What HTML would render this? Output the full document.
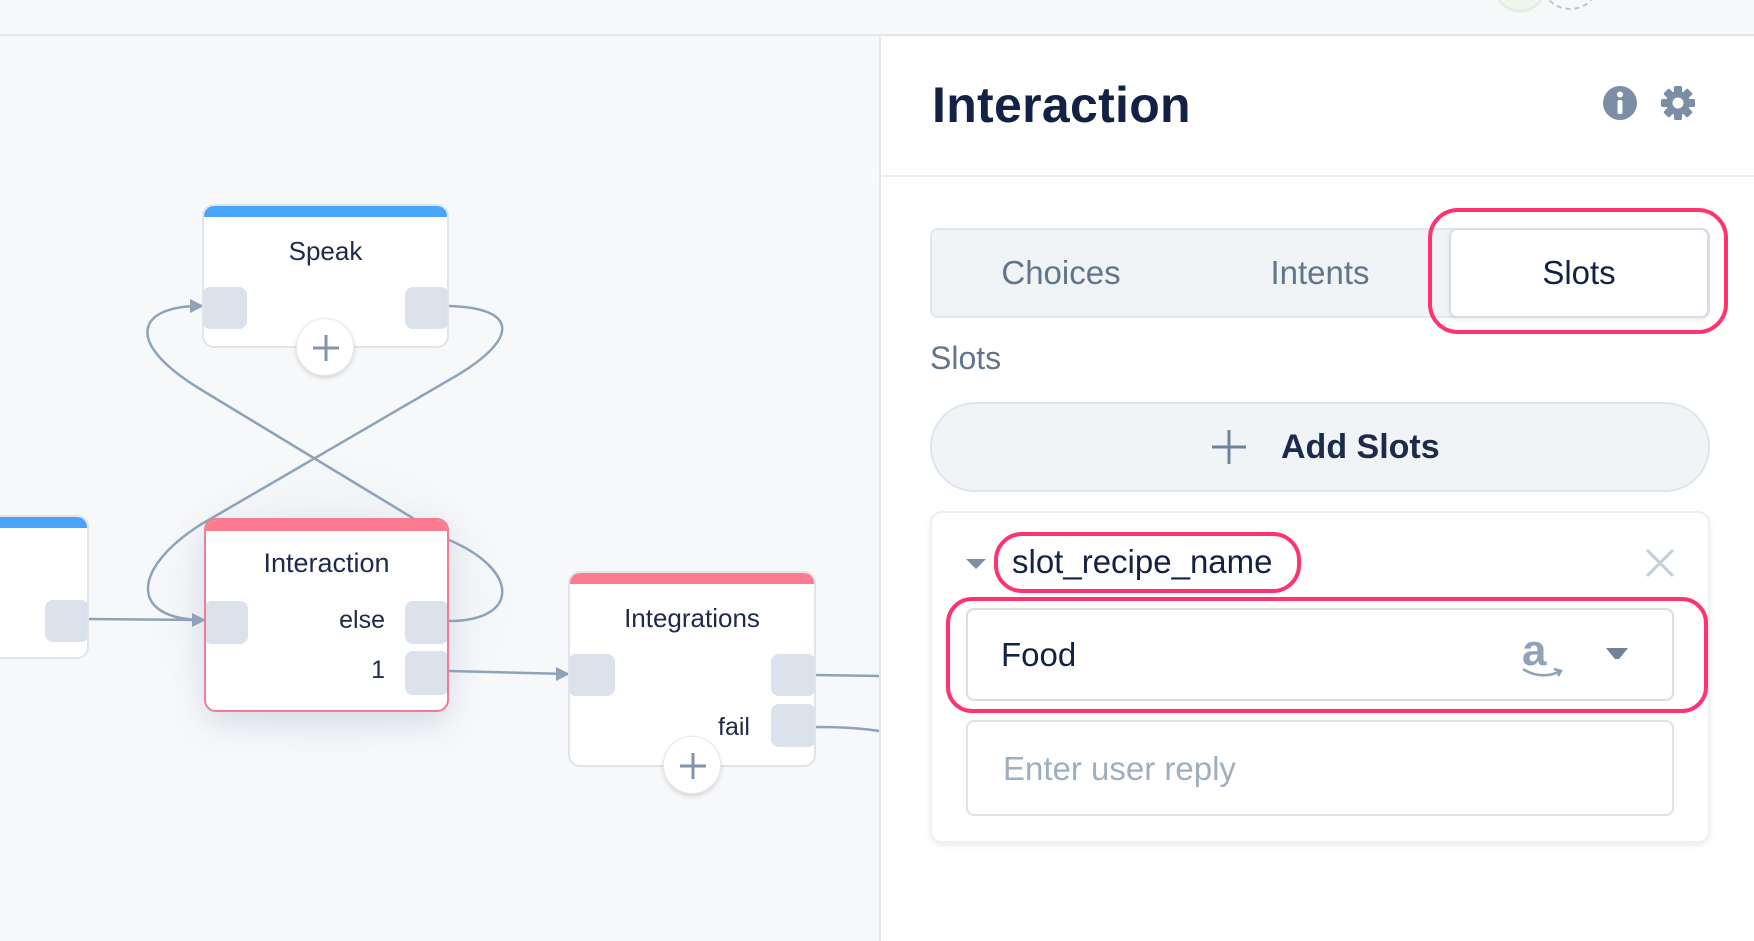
<!DOCTYPE html>
<html><head><meta charset="utf-8"><style>
*{margin:0;padding:0;box-sizing:border-box}
body{width:1754px;height:941px;overflow:hidden;background:#f7f8f9;font-family:"Liberation Sans",sans-serif;position:relative;color:#1d2a4a}
.abs{position:absolute}
.node{position:absolute;background:#fff;border:2px solid #e1e5ea;border-radius:12px;overflow:hidden}
.node .bar{position:absolute;left:0;right:0;top:0;height:11px}
.node .t{position:absolute;left:0;right:0;text-align:center;font-size:26px;color:#1d2a4a}
.port{position:absolute;background:#dbe2eb;border-radius:8px}
.lbl{position:absolute;font-size:25px;color:#1d2a4a}
.plus{position:absolute;width:58px;height:58px;border-radius:50%;background:#fff;box-shadow:0 2px 5px rgba(0,0,0,.15);border:1px solid #e6e9ee}
.tab{position:absolute;top:228px;height:90px;line-height:90px;font-size:33px;color:#62758a;text-align:center}
.red{position:absolute;border:4px solid #ff3370}
</style></head><body>
<div class="abs" style="left:0;top:0;width:1754px;height:36px;background:#f7f8f9;border-bottom:2px solid #e3e7ec"></div>
<svg class="abs" style="left:0;top:0" width="1754" height="40">
<circle cx="1520" cy="-14" r="25" fill="#eef5ef" stroke="#e2eee3" stroke-width="3"/>
<circle cx="1570" cy="-20" r="29" fill="none" stroke="#b8c6d6" stroke-width="2" stroke-dasharray="5 4"/>
</svg>
<div class="abs" style="left:140px;top:450px;width:380px;height:310px;border-radius:50%;background:radial-gradient(ellipse at center,rgba(200,210,225,.35),rgba(247,248,249,0) 70%)"></div>
<svg class="abs" style="left:0;top:0" width="880" height="941">
<g fill="none" stroke="#8fa3b8" stroke-width="2.5">
<path d="M449 621 C520 621 520 570 449 540 L200 389 C120 340 140 305 202 306"/>
<path d="M449 306 C520 308 520 340 449 380 L200 525 C130 570 130 620 204 620"/>
<path d="M89 619 L204 620"/>
<path d="M449 671 L568 674"/>
<path d="M816 675 L880 676"/>
<path d="M816 727 C850 727 865 729 880 731"/>
</g>
<g fill="#8fa3b8">
<path d="M190 299 L204 306 L190 313Z"/>
<path d="M192 613 L206 620 L192 627Z"/>
<path d="M556 667 L570 674 L556 681Z"/>
</g>
</svg>
<div class="node" style="left:-20px;top:515px;width:109px;height:144px"><div class="bar" style="background:#4aa4fb"></div><div class="port" style="left:63px;top:83px;width:44px;height:42px"></div></div>
<div class="node" style="left:202px;top:204px;width:247px;height:144px"><div class="bar" style="background:#4aa4fb"></div><div class="t" style="top:30px">Speak</div>
<div class="port" style="left:-2px;top:81px;width:45px;height:42px"></div><div class="port" style="right:-2px;top:81px;width:44px;height:42px"></div></div>
<div class="plus" style="left:296px;top:318px"><svg width="58" height="58"><path d="M29 16V42M16 29H42" stroke="#8095ab" stroke-width="3"/></svg></div>
<div class="node" style="left:204px;top:518px;width:245px;height:194px;border-color:#f07d93;box-shadow:0 12px 30px rgba(150,170,200,.3)"><div class="bar" style="background:#fc7b91"></div><div class="t" style="top:28px;font-size:27px">Interaction</div>
<div class="port" style="left:-2px;top:81px;width:44px;height:43px"></div>
<div class="port" style="right:-2px;top:81px;width:44px;height:43px"></div>
<div class="port" style="right:-2px;top:131px;width:44px;height:44px"></div>
<div class="lbl" style="right:62px;top:86px">else</div>
<div class="lbl" style="right:62px;top:136px">1</div></div>
<div class="node" style="left:568px;top:571px;width:248px;height:196px"><div class="bar" style="background:#fc7b91"></div><div class="t" style="top:30px">Integrations</div>
<div class="port" style="left:-2px;top:81px;width:47px;height:42px"></div>
<div class="port" style="right:-2px;top:81px;width:45px;height:42px"></div>
<div class="port" style="right:-2px;top:131px;width:45px;height:43px"></div>
<div class="lbl" style="right:64px;top:140px">fail</div></div>
<div class="plus" style="left:663px;top:736px"><svg width="58" height="58"><path d="M29 16V42M16 29H42" stroke="#8095ab" stroke-width="3"/></svg></div>

<div class="abs" style="left:879px;top:37px;width:875px;height:904px;background:#fff;border-left:2px solid #e3e7ec"></div>
<div class="abs" style="left:879px;top:175px;width:875px;height:2px;background:#eceff2"></div>
<div class="abs" style="left:932px;top:76px;font-size:50px;font-weight:bold;color:#132144;letter-spacing:0.3px">Interaction</div>
<svg class="abs" style="left:1600px;top:83px" width="100" height="40">
<circle cx="20" cy="20" r="17" fill="#7b8ea6"/><rect x="17.5" y="17" width="5" height="14" rx="2" fill="#fff"/><circle cx="20" cy="11.5" r="3" fill="#fff"/>
<g transform="translate(78 20)" fill="#7b8ea6"><circle r="12"/>
<g id="tt"><rect x="-4" y="-17" width="8" height="8" rx="1.5"/></g>
<use href="#tt" transform="rotate(45)"/><use href="#tt" transform="rotate(90)"/><use href="#tt" transform="rotate(135)"/><use href="#tt" transform="rotate(180)"/><use href="#tt" transform="rotate(225)"/><use href="#tt" transform="rotate(270)"/><use href="#tt" transform="rotate(315)"/>
<circle r="5.5" fill="#fff"/></g></svg>

<div class="abs" style="left:930px;top:228px;width:780px;height:90px;background:#f0f4f7;border:2px solid #e1e6eb;border-radius:8px"></div>
<div class="tab" style="left:930px;width:262px">Choices</div>
<div class="tab" style="left:1190px;width:260px">Intents</div>
<div class="abs" style="left:1449px;top:228px;width:260px;height:90px;background:#fff;border:2px solid #d6dde5;border-radius:8px;box-shadow:0 2px 4px rgba(0,0,0,.08)"></div>
<div class="tab" style="left:1449px;width:260px;color:#132144">Slots</div>
<div class="red" style="left:1428px;top:208px;width:300px;height:126px;border-radius:30px"></div>

<div class="abs" style="left:930px;top:340px;font-size:32px;color:#62758a">Slots</div>
<div class="abs" style="left:930px;top:402px;width:780px;height:90px;background:#f0f4f6;border:2px solid #dfe5ea;border-radius:45px"></div>
<svg class="abs" style="left:1210px;top:428px" width="38" height="38"><path d="M19 2V36M2 19H36" stroke="#6e8299" stroke-width="3"/></svg>
<div class="abs" style="left:1281px;top:428px;font-size:34px;font-weight:bold;color:#1d2a4a">Add Slots</div>

<div class="abs" style="left:930px;top:511px;width:780px;height:332px;background:#fff;border:2px solid #edf0f3;border-radius:12px;box-shadow:0 3px 6px rgba(0,0,0,.08)"></div>
<svg class="abs" style="left:965px;top:557px" width="22" height="14"><path d="M1 2H21L11 12Z" fill="#7b8ea6"/></svg>
<div class="abs" style="left:1012px;top:543px;font-size:33px;color:#132144">slot_recipe_name</div>
<div class="red" style="left:994px;top:532px;width:307px;height:61px;border-radius:28px"></div>
<svg class="abs" style="left:1645px;top:548px" width="30" height="30"><path d="M2 2L28 28M28 2L2 28" stroke="#c2ced9" stroke-width="3"/></svg>

<div class="abs" style="left:966px;top:608px;width:708px;height:93px;border:2px solid #d6dde5;border-radius:8px"></div>
<div class="abs" style="left:1001px;top:636px;font-size:33px;color:#132144">Food</div>
<div class="abs" style="left:1522px;top:626px;font-size:44px;font-weight:bold;color:#8fa3b8">a</div>
<svg class="abs" style="left:1520px;top:665px" width="44" height="16"><path d="M3 4C15 12 30 12 40 6M34 4L41 6L38 11" fill="none" stroke="#8fa3b8" stroke-width="2.5"/></svg>
<svg class="abs" style="left:1605px;top:647px" width="24" height="14"><path d="M1 1H23L14 12H10Z" fill="#6e8299"/></svg>
<div class="red" style="left:946px;top:597px;width:762px;height:116px;border-radius:26px"></div>

<div class="abs" style="left:966px;top:720px;width:708px;height:96px;border:2px solid #dde3ea;border-radius:8px"></div>
<div class="abs" style="left:1003px;top:750px;font-size:33px;color:#a0afbf">Enter user reply</div>
</body></html>
